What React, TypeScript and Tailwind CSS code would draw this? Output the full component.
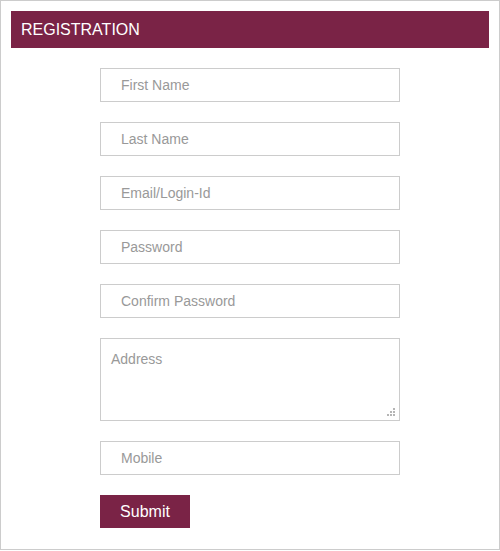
import React from "react";

export default function App() {
  const fields = ["First Name", "Last Name", "Email/Login-Id", "Password", "Confirm Password"];
  return (
    <div className="w-[500px] h-[550px] border border-[#cccccc] bg-white p-[10px] box-border" style={{ fontFamily: '"Liberation Sans", Arial, sans-serif' }}>
      <div className="h-[37px] bg-[#7a2346] flex items-center pl-[10px] text-white text-[16px]">REGISTRATION</div>
      <form className="flex flex-col items-start pl-[89px] pt-[20px] gap-[20px]" onSubmit={(e) => e.preventDefault()}>
        {fields.map((f) => (
          <input
            key={f}
            type={f.includes("Password") ? "password" : "text"}
            placeholder={f}
            className="w-[300px] h-[34px] border border-[#cccccc] pl-[20px] text-[14px] text-[#333] placeholder:text-[#999999] outline-none bg-white"
          />
        ))}
        <div className="relative w-[300px] h-[83px]">
          <textarea
            placeholder="Address"
            className="w-[300px] h-[83px] border border-[#cccccc] p-[10px] text-[14px] text-[#333] placeholder:text-[#999999] outline-none bg-white block resize-none"
          />
          <svg className="absolute left-[287px] top-[70px] pointer-events-none" width="8" height="8" viewBox="0 0 8 8">
            <g fill="#b5b5b5">
              <rect x="6" y="0" width="2" height="2" />
              <rect x="3" y="3" width="2" height="2" />
              <rect x="6" y="3" width="2" height="2" />
              <rect x="0" y="6" width="2" height="2" />
              <rect x="3" y="6" width="2" height="2" />
              <rect x="6" y="6" width="2" height="2" />
            </g>
          </svg>
        </div>
        <input
          type="text"
          placeholder="Mobile"
          className="w-[300px] h-[34px] border border-[#cccccc] pl-[20px] text-[14px] text-[#333] placeholder:text-[#999999] outline-none bg-white"
        />
        <button type="submit" className="w-[90px] h-[33px] bg-[#7a2346] text-white text-[16px]">Submit</button>
      </form>
    </div>
  );
}
